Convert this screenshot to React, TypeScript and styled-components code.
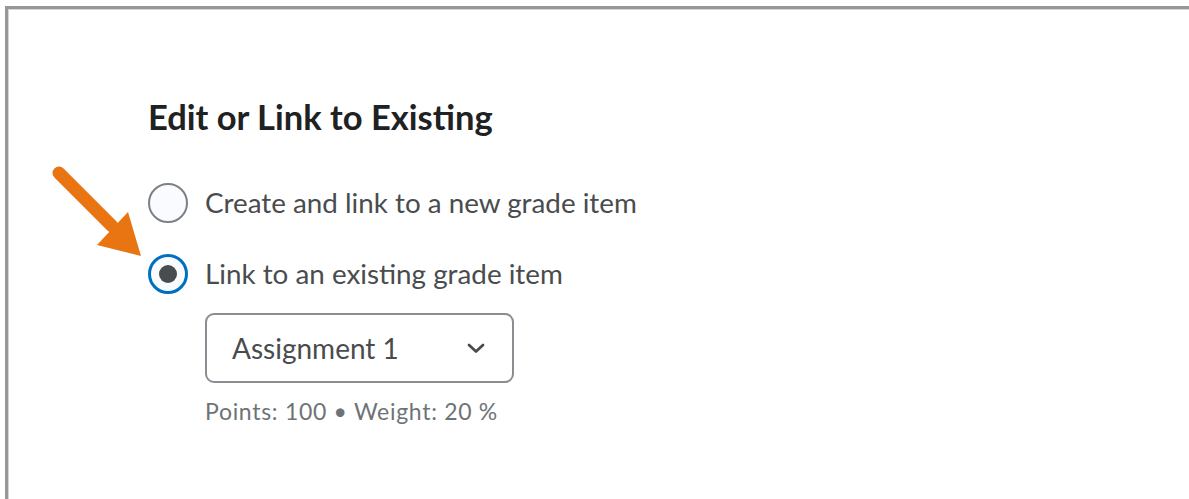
import React from "react";
import styled, { createGlobalStyle } from "styled-components";

const Global = createGlobalStyle`
  html, body {
    margin: 0;
    padding: 0;
    background: #ffffff;
    overflow: hidden;
  }
  body {
    font-family: Lato, "Open Sans", "Liberation Sans", sans-serif;
    color: #494c4e;
  }
`;

const Frame = styled.div`
  position: relative;
  margin: 6px 0 0 5px;
  height: 493px;
  border-top: 3px solid #979797;
  border-left: 3px solid #979797;
  box-shadow: inset 1px 1px 0 #d6d6d6;
  box-sizing: border-box;
`;

const Content = styled.section`
  display: flex;
  flex-direction: column;
  padding: 88px 0 0 140px;
`;

const Heading = styled.h2`
  margin: 0 0 46px;
  font-size: 34.5px;
  line-height: 40px;
  font-weight: 700;
  color: #202122;
`;

const Options = styled.div`
  display: flex;
  flex-direction: column;
  gap: 31px;
`;

const Option = styled.label`
  display: flex;
  align-items: center;
  gap: 17px;
  font-size: 27.8px;
  line-height: 40px;
  color: #494c4e;
  cursor: pointer;
`;

const Radio = styled.span<{ $checked?: boolean }>`
  width: 40px;
  height: 40px;
  flex: none;
  border-radius: 50%;
  box-sizing: border-box;
  background: #f9fbff;
  border: ${(p) => (p.$checked ? "3px solid #006fbf" : "2px solid #7c8186")};
  display: flex;
  align-items: center;
  justify-content: center;

  &::after {
    content: "";
    display: ${(p) => (p.$checked ? "block" : "none")};
    width: 18px;
    height: 18px;
    border-radius: 50%;
    background: #494c4e;
  }
`;

const Nested = styled.div`
  display: flex;
  flex-direction: column;
  padding: 19px 0 0 57px;
`;

const Select = styled.div`
  width: 309px;
  height: 70px;
  box-sizing: border-box;
  border: 2px solid #8a8e92;
  border-radius: 9px;
  display: flex;
  align-items: center;
  justify-content: space-between;
  padding: 0 25px 0 25px;
  font-size: 28px;
  color: #494c4e;
  background: #ffffff;
`;

const Meta = styled.div`
  margin-top: 14px;
  font-size: 23px;
  letter-spacing: 0.7px;
  line-height: 28px;
  color: #6e7376;
`;

const Annotation = styled.svg`
  position: absolute;
  left: -8px;
  top: -9px;
  width: 200px;
  height: 300px;
  pointer-events: none;
`;

export default function App() {
  return (
    <>
      <Global />
      <Frame>
        <Content>
          <Heading>Edit or Link to Existing</Heading>
          <Options>
            <Option>
              <Radio />
              Create and link to a new grade item
            </Option>
            <Option>
              <Radio $checked />
              Link to an existing grade item
            </Option>
          </Options>
          <Nested>
            <Select>
              <span>Assignment 1</span>
              <svg width="22" height="12" viewBox="0 0 22 12">
                <path
                  d="M4 3 L11 9.5 L18 3"
                  fill="none"
                  stroke="#494c4e"
                  strokeWidth="2.8"
                  strokeLinecap="round"
                  strokeLinejoin="round"
                />
              </svg>
            </Select>
            <Meta>Points: 100 • Weight: 20 %</Meta>
          </Nested>
        </Content>
        <Annotation viewBox="0 0 200 300">
          <line
            x1="59"
            y1="173"
            x2="112"
            y2="226"
            stroke="#e87511"
            strokeWidth="13"
            strokeLinecap="round"
          />
          <polygon points="97,245 128,212 141,256" fill="#e87511" />
        </Annotation>
      </Frame>
    </>
  );
}
